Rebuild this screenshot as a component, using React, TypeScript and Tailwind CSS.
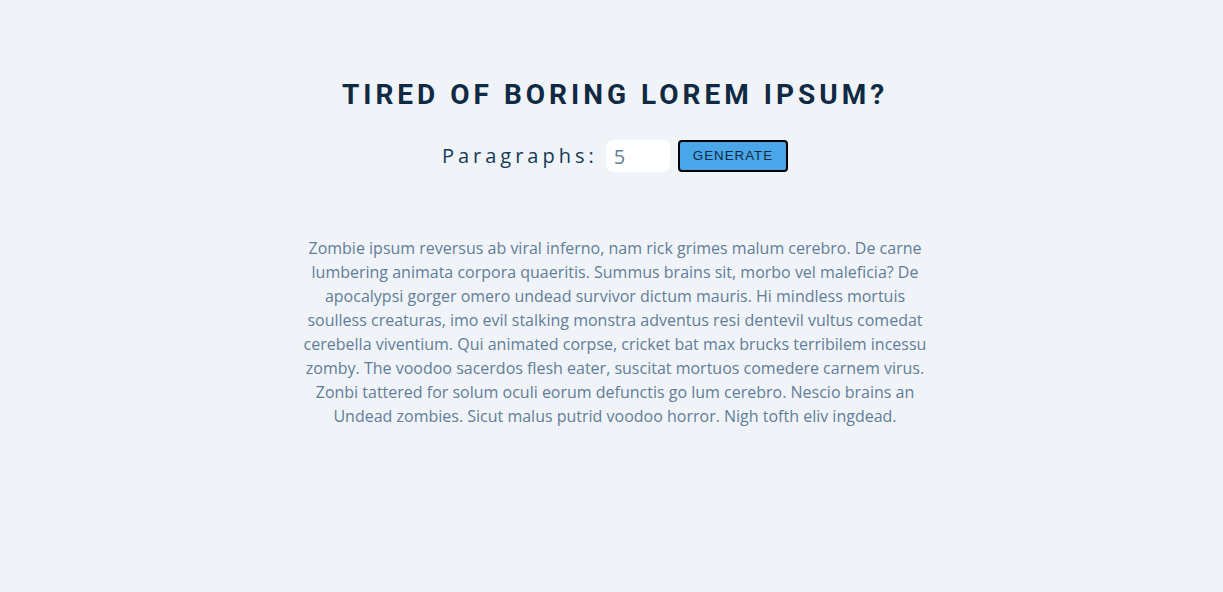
const text =
  "Zombie ipsum reversus ab viral inferno, nam rick grimes malum cerebro. De carne lumbering animata corpora quaeritis. Summus brains sit, morbo vel maleficia? De apocalypsi gorger omero undead survivor dictum mauris. Hi mindless mortuis soulless creaturas, imo evil stalking monstra adventus resi dentevil vultus comedat cerebella viventium. Qui animated corpse, cricket bat max brucks terribilem incessu zomby. The voodoo sacerdos flesh eater, suscitat mortuos comedere carnem virus. Zonbi tattered for solum oculi eorum defunctis go lum cerebro. Nescio brains an Undead zombies. Sicut malus putrid voodoo horror. Nigh tofth eliv ingdead.";

export default function App() {
  return (
    <div className="min-h-[592px] bg-[#f0f4f8] pl-[7px] font-['Open_Sans',sans-serif]">
      <section className="mx-auto flex w-[40rem] flex-col items-center pt-[77px] text-center">
        <h3 className="font-['Roboto',sans-serif] text-[28px] font-bold uppercase leading-[36px] tracking-[4px] text-[#102a43]">
          Tired of boring lorem ipsum?
        </h3>
        <form className="mt-[27px] flex items-center gap-[8px]">
          <label className="text-[20px] tracking-[0.2em] text-[#133a56]">Paragraphs:</label>
          <input
            type="number"
            defaultValue={5}
            className="h-[32px] w-[64px] rounded-[8px] bg-white px-[8px] text-[20px] text-[#627d98] outline-none"
          />
          <button
            type="button"
            className="h-[32px] rounded-[4px] border-2 border-black bg-[#49a6e9] px-[13px] font-['Liberation_Sans',sans-serif] text-[13.333px] uppercase tracking-[1px] text-[#102a43]"
          >
            Generate
          </button>
        </form>
        <article className="mt-[64px]">
          <p className="text-[16px] leading-[24px] text-[#627d98]">{text}</p>
        </article>
      </section>
    </div>
  );
}
